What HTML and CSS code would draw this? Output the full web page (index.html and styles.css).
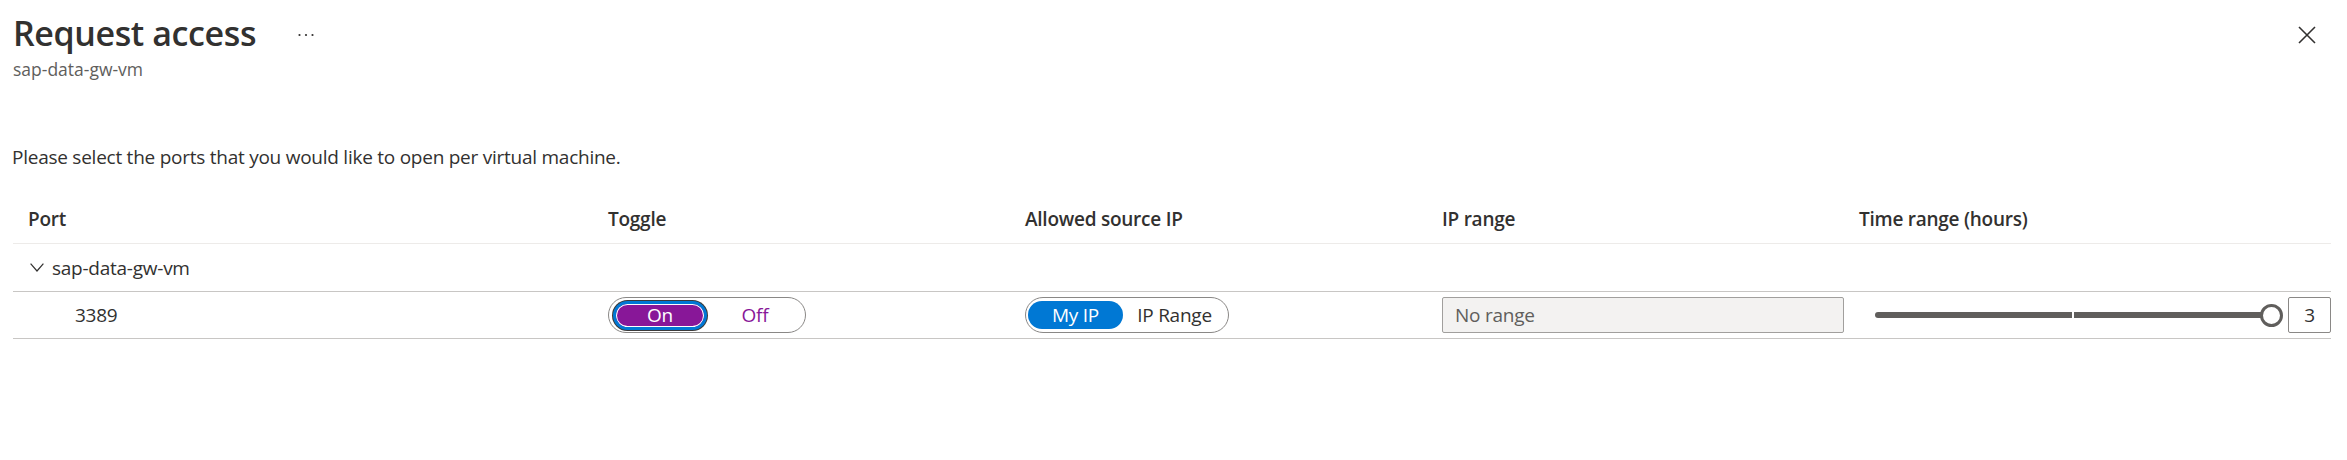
FILE: index.html
```html
<!DOCTYPE html>
<html lang="en">
<head>
<meta charset="utf-8">
<title>Request access</title>
<link rel="stylesheet" href="styles.css">
</head>
<body>
<div class="blade">
  <header class="blade-header">
    <div class="title-block">
      <div class="title-row">
        <h1 class="title">Request access</h1>
        <button class="more" aria-label="More">
          <svg width="16" height="4" viewBox="0 0 16 4"><circle cx="1.5" cy="2" r="1.1"/><circle cx="8" cy="2" r="1.1"/><circle cx="14.5" cy="2" r="1.1"/></svg>
        </button>
      </div>
      <div class="subtitle">sap-data-gw-vm</div>
    </div>
    <button class="close" aria-label="Close">
      <svg width="18" height="18" viewBox="0 0 18 18"><path d="M1 1 L17 17 M17 1 L1 17"/></svg>
    </button>
  </header>

  <p class="desc">Please select the ports that you would like to open per virtual machine.</p>

  <div class="grid">
    <div class="row head">
      <div class="cell">Port</div>
      <div class="cell">Toggle</div>
      <div class="cell">Allowed source IP</div>
      <div class="cell">IP range</div>
      <div class="cell">Time range (hours)</div>
    </div>
    <div class="row group">
      <div class="cell group-cell">
        <svg class="chev" width="14" height="9" viewBox="0 0 14 9"><path d="M0.6 0.6 L7 8 L13.4 0.6"/></svg>
        <span>sap-data-gw-vm</span>
      </div>
    </div>
    <div class="row data">
      <div class="cell port">3389</div>
      <div class="cell">
        <div class="pill toggle">
          <span class="seg on">On</span>
          <span class="seg off">Off</span>
        </div>
      </div>
      <div class="cell">
        <div class="pill ipsel">
          <span class="seg myip">My IP</span>
          <span class="seg iprange">IP Range</span>
        </div>
      </div>
      <div class="cell">
        <div class="textbox">No range</div>
      </div>
      <div class="cell slider-cell">
        <div class="slider">
          <div class="track"></div>
          <div class="thumb"></div>
        </div>
        <div class="value">3</div>
      </div>
    </div>
  </div>
</div>
</body>
</html>
```

FILE: styles.css
```css
html, body {
  margin: 0;
  padding: 0;
  background: #ffffff;
}
body {
  font-family: "Open Sans", "Noto Sans", "Liberation Sans", sans-serif;
  color: #323130;
}
.blade-header {
  display: flex;
  justify-content: space-between;
  align-items: flex-start;
  padding: 9px 31px 0 13px;
}
.title-row {
  display: flex;
  align-items: flex-start;
  gap: 42px;
}
.title {
  margin: 0;
  font-size: 34px;
  font-weight: 600;
  letter-spacing: -0.4px;
  line-height: 48px;
  color: #323130;
}
.more {
  border: 0;
  background: none;
  padding: 0;
  width: 16px;
  height: 4px;
  display: flex;
  margin-top: 24px;
}
.more svg { fill: #323130; }
.subtitle {
  font-size: 17.5px;
  line-height: 24px;
  color: #605e5c;
}
.close {
  border: 0;
  background: none;
  padding: 0;
  margin-top: 17px;
  width: 18px;
  height: 18px;
  display: flex;
}
.close svg path {
  stroke: #323130;
  stroke-width: 1.6;
  fill: none;
}
.desc {
  margin: 62px 0 0 12px;
  font-size: 19px;
  letter-spacing: -0.25px;
  line-height: 28px;
}
.grid {
  margin: 24px 16px 0 13px;
}
.row {
  display: grid;
  grid-template-columns: 580px 417px 417px 417px 487px;
  border-bottom: 1px solid #c8c6c4;
  font-size: 19px;
  letter-spacing: -0.25px;
  line-height: 28px;
}
.row.head {
  height: 48px;
  border-bottom-color: #edebe9;
  font-weight: 600;
  align-items: center;
}
.row.group {
  height: 47px;
  align-items: center;
}
.row.data {
  height: 46px;
  align-items: center;
}
.cell {
  padding-left: 15px;
  display: flex;
  align-items: center;
}
.group-cell {
  padding-left: 17px;
  gap: 8px;
}
.chev path {
  stroke: #323130;
  stroke-width: 1.2;
  fill: none;
}
.cell.port {
  padding-left: 62px;
}
.pill {
  display: flex;
  align-items: center;
  height: 36px;
  box-sizing: border-box;
  border: 1px solid #8a8886;
  border-radius: 18px;
}
.toggle {
  width: 198px;
  padding: 0 2px;
}
.seg {
  display: flex;
  align-items: center;
  justify-content: center;
  box-sizing: border-box;
}
.seg.on {
  width: 94px;
  height: 29px;
  margin-left: 2px;
  background: #881798;
  color: #ffffff;
  border: 3px solid #0078d4;
  border-radius: 15px;
  box-shadow: 0 0 0 1px #3b3a39, inset 0 0 0 1px #ffffff;
}
.seg.off {
  flex: 1;
  color: #881798;
}
.ipsel {
  width: 204px;
  padding: 0 2px;
}
.seg.myip {
  width: 95px;
  height: 28px;
  background: #0078d4;
  color: #ffffff;
  border-radius: 14px;
}
.seg.iprange {
  flex: 1;
  color: #323130;
}
.textbox {
  width: 100%;
  height: 36px;
  box-sizing: border-box;
  background: #f3f2f1;
  border: 1px solid #a19f9d;
  border-radius: 2px;
  padding-left: 12px;
  display: flex;
  align-items: center;
  color: #605e5c;
}
.slider-cell {
  padding-left: 31px;
}
.slider {
  flex: 1;
  display: flex;
  align-items: center;
}
.track {
  flex: 1;
  height: 6px;
  border-radius: 3px 0 0 3px;
  background: linear-gradient(to right, #605e5c 0, #605e5c calc(50% - 1px), #ffffff calc(50% - 1px), #ffffff calc(50% + 1px), #605e5c calc(50% + 1px));
}
.thumb {
  width: 23px;
  height: 23px;
  box-sizing: border-box;
  border: 3px solid #605e5c;
  border-radius: 50%;
  background: #ffffff;
  margin-left: -11px;
  position: relative;
}
.value {
  width: 43px;
  height: 36px;
  box-sizing: border-box;
  margin-left: 5px;
  border: 1px solid #8a8886;
  border-radius: 2px;
  display: flex;
  align-items: center;
  justify-content: center;
}
```
